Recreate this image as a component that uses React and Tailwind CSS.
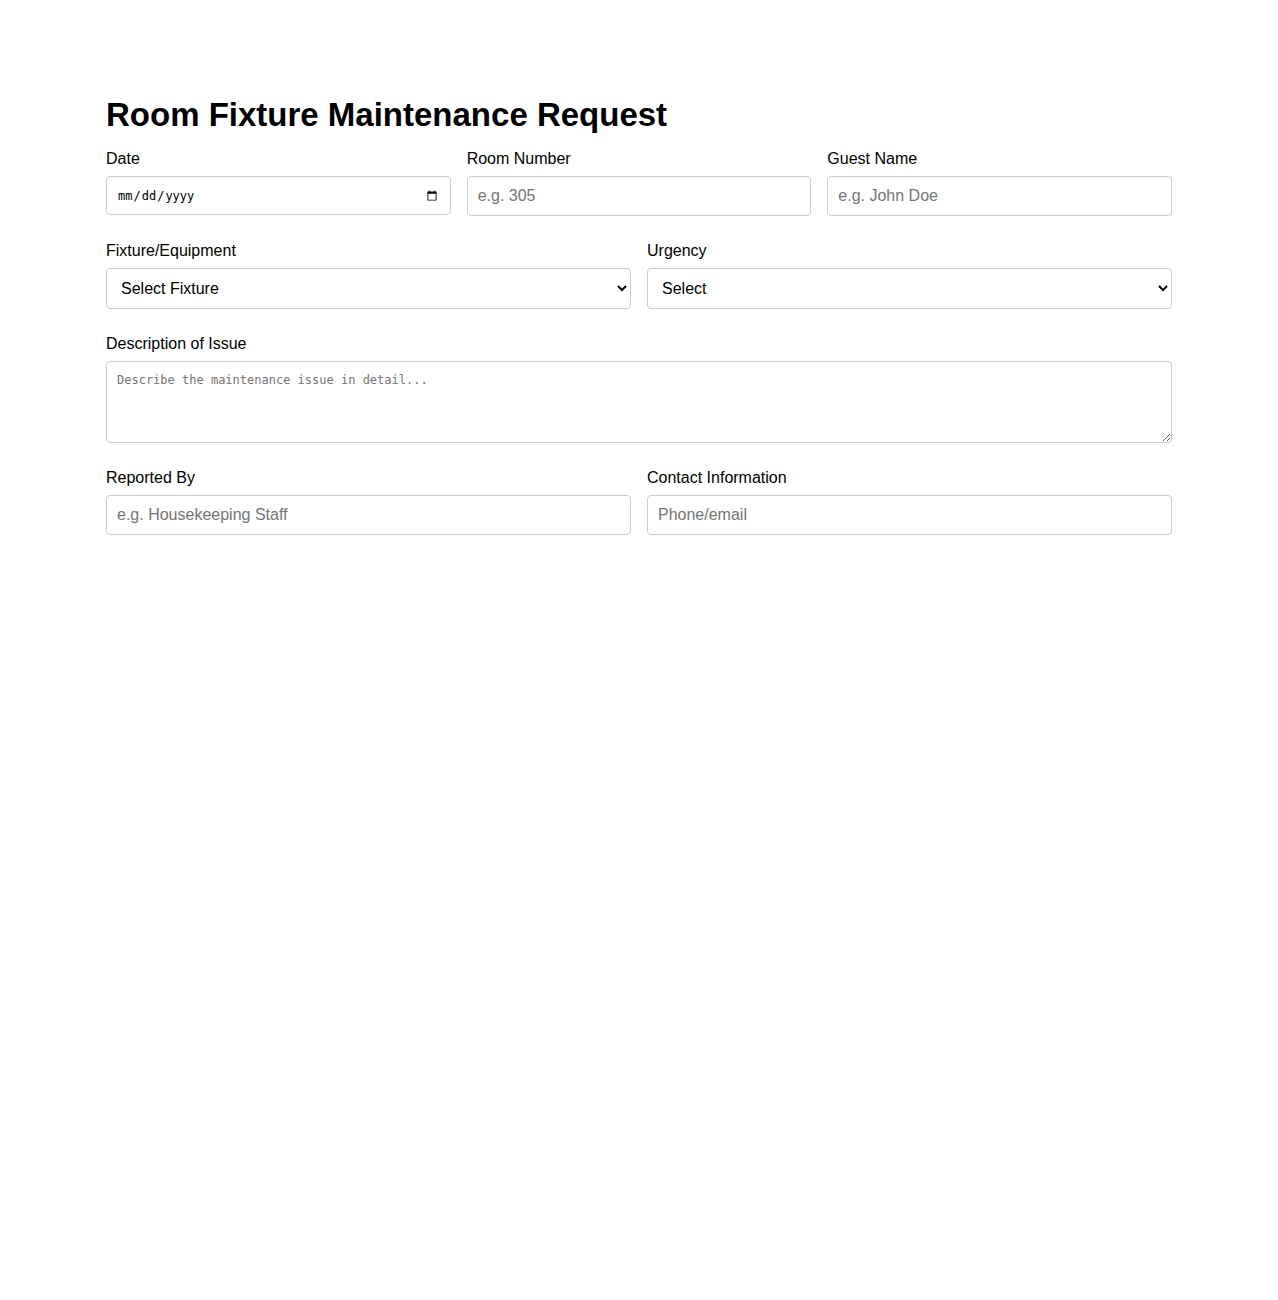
import React from "react";

const labelCls = "block text-[16px] leading-[18px] text-black mb-2";
const inputCls =
  "block w-full h-10 px-[10px] border border-[#cccccc] rounded-[4px] bg-white text-[16px] text-black placeholder:text-[#757575] outline-none";

export default function App() {
  return (
    <div className="min-h-[1300px] bg-white" style={{ fontFamily: '"Liberation Sans", Arial, sans-serif' }}>
      <div className="w-[1066px] mx-auto pt-[96px]">
        <h1 className="text-[33px] leading-[37px] font-bold text-black mb-[17px]">
          Room Fixture Maintenance Request
        </h1>

        <div className="grid grid-cols-3 gap-4 mb-[26px]">
          <div>
            <label className={labelCls}>Date</label>
            <input
              type="date"
              className="block w-full h-[39px] px-[10px] border border-[#cccccc] rounded-[4px] bg-white text-[12px] text-black outline-none"
              style={{ fontFamily: '"DejaVu Sans Mono", "Liberation Mono", monospace' }}
            />
          </div>
          <div>
            <label className={labelCls}>Room Number</label>
            <input type="text" placeholder="e.g. 305" className={inputCls} />
          </div>
          <div>
            <label className={labelCls}>Guest Name</label>
            <input type="text" placeholder="e.g. John Doe" className={inputCls} />
          </div>
        </div>

        <div className="grid grid-cols-2 gap-4 mb-[26px]">
          <div>
            <label className={labelCls}>Fixture/Equipment</label>
            <select className="block w-full h-[41px] px-[10px] border border-[#cccccc] rounded-[4px] bg-white text-[16px] text-black outline-none">
              <option>Select Fixture</option>
              <option>Lighting</option>
              <option>Plumbing</option>
              <option>Air Conditioning</option>
              <option>Furniture</option>
            </select>
          </div>
          <div>
            <label className={labelCls}>Urgency</label>
            <select className="block w-full h-[41px] px-[10px] border border-[#cccccc] rounded-[4px] bg-white text-[16px] text-black outline-none">
              <option>Select</option>
              <option>Low</option>
              <option>Medium</option>
              <option>High</option>
            </select>
          </div>
        </div>

        <div className="mb-[26px]">
          <label className={labelCls}>Description of Issue</label>
          <textarea
            placeholder="Describe the maintenance issue in detail..."
            className="block w-full h-[82px] px-[10px] pt-[11px] pb-[10px] border border-[#cccccc] rounded-[4px] bg-white text-[12px] leading-[15px] text-black placeholder:text-[#757575] outline-none resize-y"
            style={{ fontFamily: '"DejaVu Sans Mono", "Liberation Mono", monospace' }}
          />
        </div>

        <div className="grid grid-cols-2 gap-4">
          <div>
            <label className={labelCls}>Reported By</label>
            <input type="text" placeholder="e.g. Housekeeping Staff" className={inputCls} />
          </div>
          <div>
            <label className={labelCls}>Contact Information</label>
            <input type="text" placeholder="Phone/email" className={inputCls} />
          </div>
        </div>
      </div>
    </div>
  );
}
